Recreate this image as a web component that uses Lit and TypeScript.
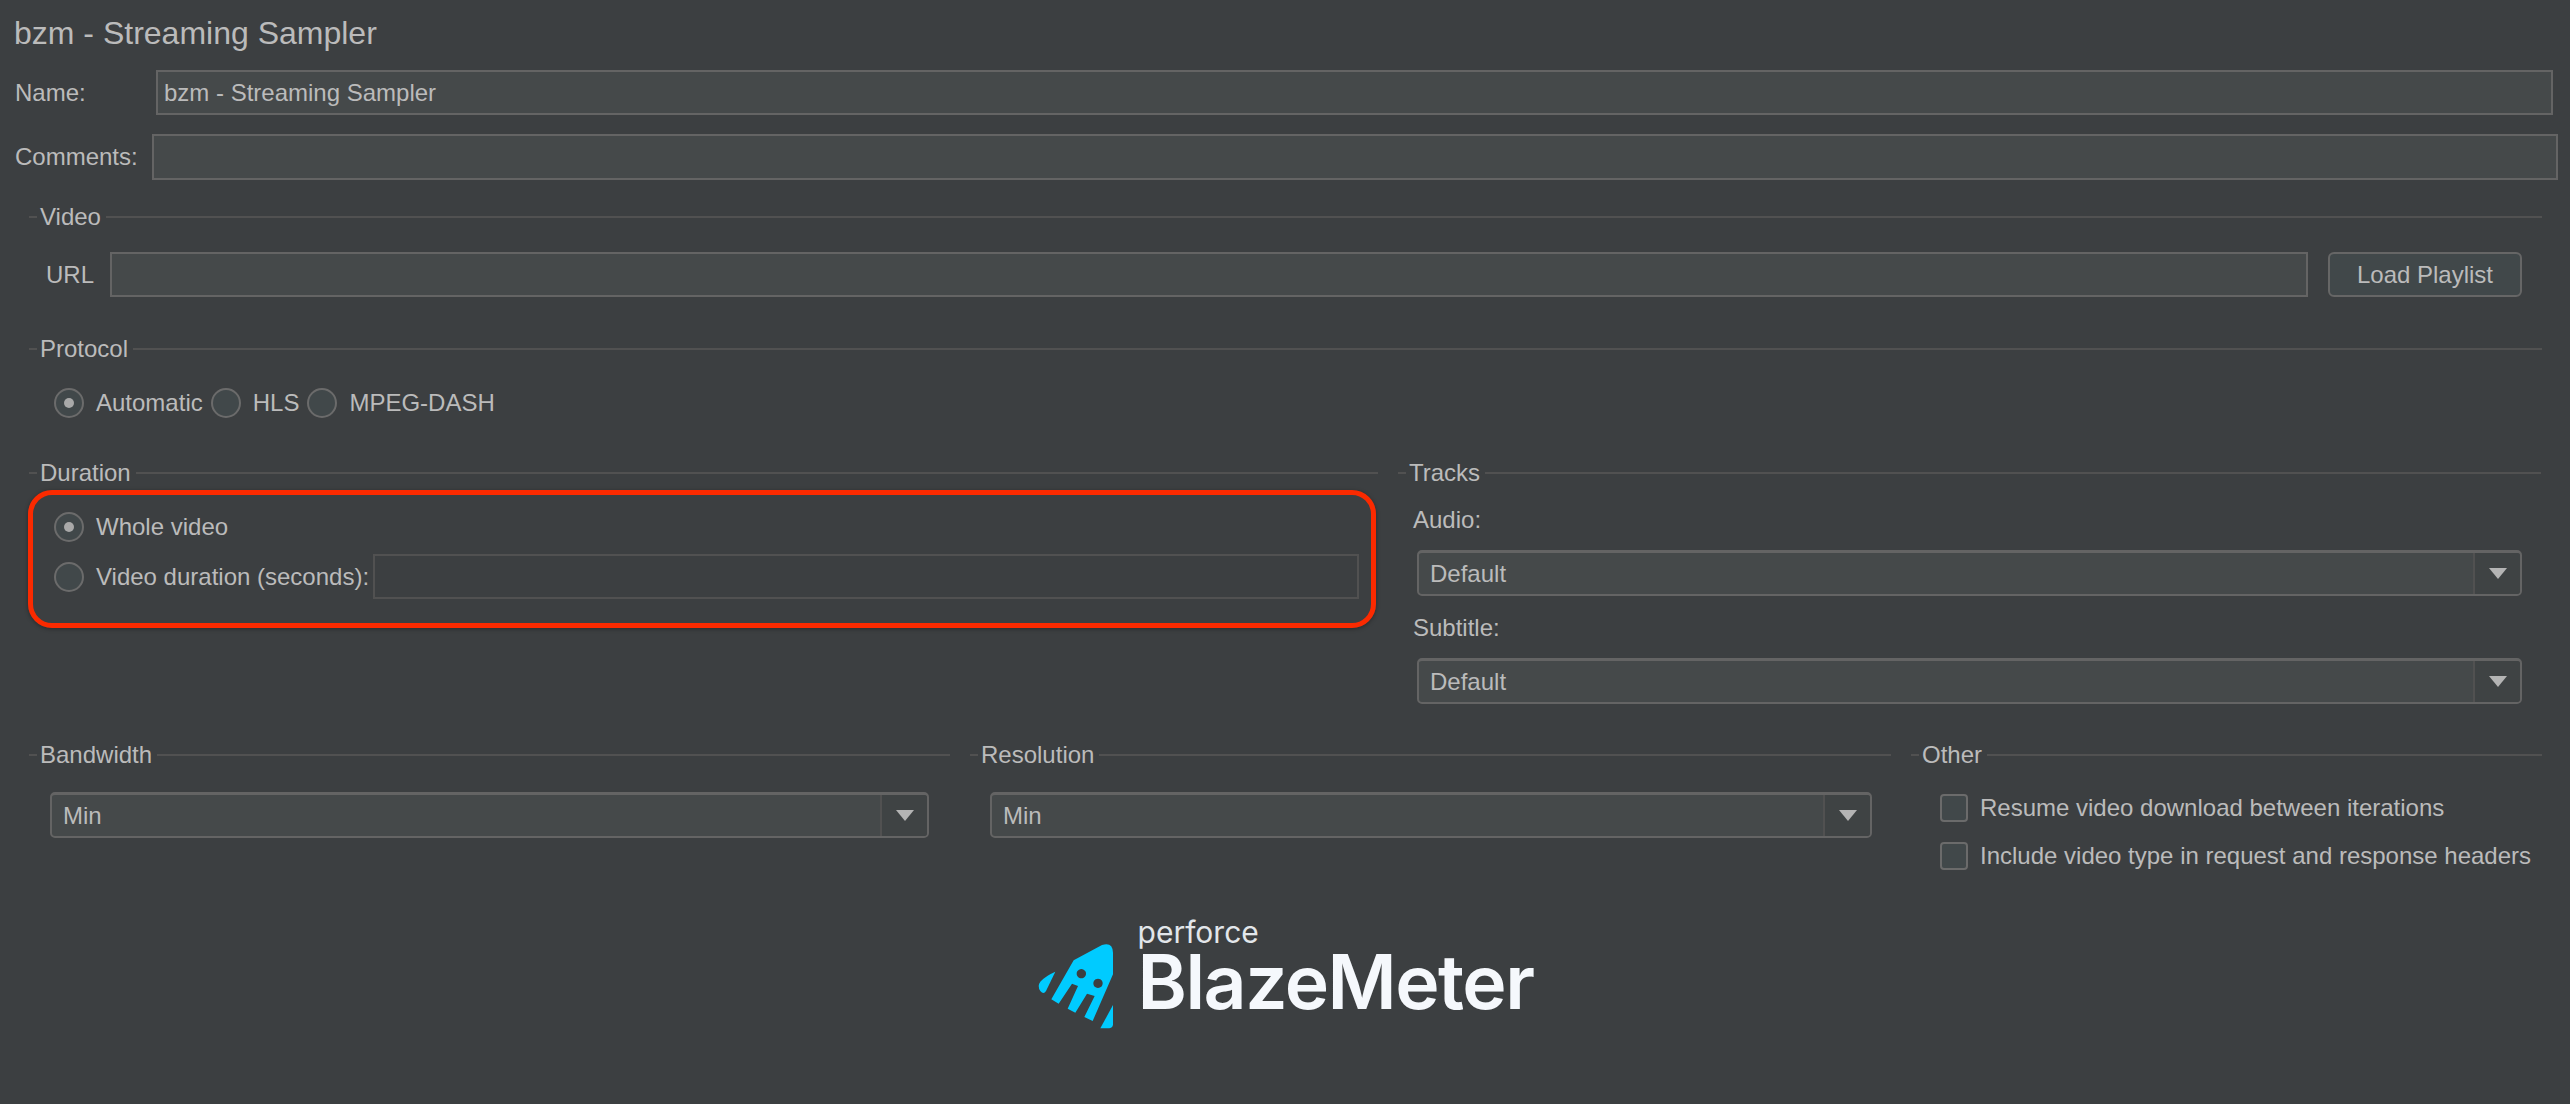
import { LitElement, html, css } from "lit";
import { customElement } from "lit/decorators.js";

@customElement("app-root")
export class AppRoot extends LitElement {
  static styles = css`
    :host { display: block; }
    * { box-sizing: border-box; }
    .page {
      width: 2570px; height: 1104px; background: #3c3f41; color: #bbbbbb; overflow: hidden;
      font: 24px/28px "Liberation Sans", Arial, sans-serif; padding-top: 15px;
    }
    .title { font-size: 32px; line-height: 36px; padding-left: 14px; }
    .row { display: flex; align-items: center; }
    .name-row { margin-top: 19px; height: 45px; padding: 0 17px 0 15px; }
    .name-row label { width: 141px; flex: none; }
    .comments-row { margin-top: 19px; height: 46px; padding: 0 12px 0 15px; }
    .comments-row label { width: 137px; flex: none; }
    .input {
      flex: 1; min-width: 0; height: 100%; background: #45494a; border: 2px solid #646464;
      padding: 0 6px; display: flex; align-items: center; white-space: nowrap;
    }
    .input.off { background: transparent; border-color: #515151; }
    .sec { padding: 0 28px 0 29px; }
    .legend { display: flex; align-items: center; height: 28px; }
    .legend::before { content: ""; width: 8px; height: 2px; background: #515151; margin-right: 3px; flex: none; }
    .legend::after { content: ""; flex: 1; height: 2px; background: #515151; margin-left: 5px; }
    .video { margin-top: 23px; }
    .url-row { margin-top: 21px; height: 45px; padding: 0 20px 0 17px; }
    .url-row label { width: 64px; flex: none; }
    .btn {
      flex: none; width: 194px; height: 45px; margin-left: 20px; border: 2px solid #666666; border-radius: 6px;
      background: #41484a; display: flex; align-items: center; justify-content: center;
    }
    .protocol { margin-top: 38px; }
    .radios { margin-top: 25px; height: 30px; padding-left: 25px; }
    .radio { flex: none; width: 30px; height: 30px; border-radius: 50%; border: 2px solid #6b6b6b; background: #41484a;
      display: flex; align-items: center; justify-content: center; margin-right: 12px; }
    .radio.on::after { content: ""; width: 10px; height: 10px; border-radius: 50%; background: #a9a9a9; }
    .radios span { margin-right: 8px; }
    .mid { display: grid; grid-template-columns: 1349px 1143px; column-gap: 20px; margin: 41px 0 0 29px; }
    .duration-body { position: relative; margin-top: 25px; padding-left: 25px; }
    .redbox {
      position: absolute; left: -1px; top: -22px; width: 1348px; height: 138px;
      border: 5.5px solid #fb2a00; border-radius: 24px; box-shadow: 0 1px 4px rgba(0,0,0,.35);
    }
    .dur1 { height: 30px; }
    .dur2 { margin-top: 12px; height: 45px; padding-right: 19px; }
    .dur2 .radio { margin-right: 12px; }
    .dur2 span { margin-right: 4px; white-space: nowrap; }
    .tracks label { display: block; margin: 19px 0 0 15px; }
    .tracks label + .combo { margin-top: 16px; }
    .tracks label.second { margin-top: 18px; }
    .tracks .combo { margin-left: 19px; margin-right: 19px; }
    .combo {
      height: 46px; border: 2px solid #646464; border-top-width: 3px; border-radius: 5px; background: #45494a;
      display: flex; align-items: center;
    }
    .combo .val { flex: 1; padding-left: 11px; }
    .combo .arrow {
      flex: none; width: 47px; height: 100%; border-left: 2px solid #515151; background: #3f4344;
      display: flex; align-items: center; justify-content: center; border-radius: 0 3px 3px 0;
    }
    .combo .arrow::after {
      content: ""; border-left: 9px solid transparent; border-right: 9px solid transparent; border-top: 11px solid #b4b4b4;
    }
    .bottom { display: grid; grid-template-columns: 921px 921px 631px; column-gap: 20px; margin: 37px 0 0 29px; }
    .bw .combo { margin: 23px 21px 0 21px; }
    .res .combo { margin: 23px 19px 0 20px; }
    .checks { margin-top: 25px; padding-left: 29px; display: flex; flex-direction: column; gap: 20px; }
    .check { height: 28px; }
    .box { flex: none; width: 28px; height: 28px; border: 2px solid #6b6b6b; border-radius: 4px; background: #41484a; margin-right: 12px; }
    .check span { white-space: nowrap; }
    .logo { display: flex; justify-content: center; margin-top: 47px; }
    .logo svg { width: 78px; height: 86px; flex: none; margin: 26px 23px 0 0; }
    .words { display: flex; flex-direction: column; font-family: Inter, "Liberation Sans", sans-serif; }
    .perforce { font-size: 30px; line-height: 30px; color: #e2e6ea; }
    .blaze { font-size: 75px; line-height: 70px; font-weight: 600; color: #f5f8fc; letter-spacing: -1.5px; }
  `;

  private combo(v: string) {
    return html`<div class="combo"><div class="val">${v}</div><div class="arrow"></div></div>`;
  }

  render() {
    return html`
      <div class="page">
        <div class="title">bzm - Streaming Sampler</div>
        <div class="row name-row"><label>Name:</label><div class="input">bzm - Streaming Sampler</div></div>
        <div class="row comments-row"><label>Comments:</label><div class="input"></div></div>

        <div class="sec video">
          <div class="legend">Video</div>
          <div class="row url-row"><label>URL</label><div class="input"></div><div class="btn">Load Playlist</div></div>
        </div>

        <div class="sec protocol">
          <div class="legend">Protocol</div>
          <div class="row radios">
            <div class="radio on"></div><span>Automatic</span>
            <div class="radio"></div><span>HLS</span>
            <div class="radio"></div><span>MPEG-DASH</span>
          </div>
        </div>

        <div class="mid">
          <div>
            <div class="legend">Duration</div>
            <div class="duration-body">
              <div class="redbox"></div>
              <div class="row dur1"><div class="radio on"></div><span>Whole video</span></div>
              <div class="row dur2"><div class="radio"></div><span>Video duration (seconds):</span><div class="input off"></div></div>
            </div>
          </div>
          <div class="tracks">
            <div class="legend">Tracks</div>
            <label>Audio:</label>
            ${this.combo("Default")}
            <label class="second">Subtitle:</label>
            ${this.combo("Default")}
          </div>
        </div>

        <div class="bottom">
          <div class="bw"><div class="legend">Bandwidth</div>${this.combo("Min")}</div>
          <div class="res"><div class="legend">Resolution</div>${this.combo("Min")}</div>
          <div>
            <div class="legend">Other</div>
            <div class="checks">
              <div class="row check"><div class="box"></div><span>Resume video download between iterations</span></div>
              <div class="row check"><div class="box"></div><span>Include video type in request and response headers</span></div>
            </div>
          </div>
        </div>

        <div class="logo">
          <svg viewBox="45 36 234 258" fill="#00cbff">
            <path fill-rule="evenodd" d="M240 42Q272 32 273 65L273 130L212 270L187 258L218 195L195 188L160 245L137 233L168 165L150 158L110 218L88 205L155 88ZM178 114a14 14 0 1 0 .01 0ZM228 143a14 14 0 1 0 .01 0Z"/>
            <path d="M100 122L72 180Q65 192 55 180Q45 165 55 152Q70 135 100 122Z"/>
            <path d="M273 222L235 292L262 292Q273 290 273 280Z"/>
          </svg>
          <div class="words"><div class="perforce">perforce</div><div class="blaze">BlazeMeter</div></div>
        </div>
      </div>
    `;
  }
}
